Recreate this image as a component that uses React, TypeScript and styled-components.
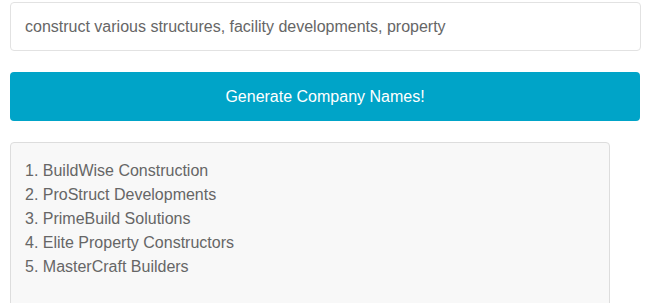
import styled, { createGlobalStyle } from 'styled-components';
import React, { useState } from 'react';

const names = [
  'BuildWise Construction',
  'ProStruct Developments',
  'PrimeBuild Solutions',
  'Elite Property Constructors',
  'MasterCraft Builders',
];

function App() {
  const [prompt, setPrompt] = useState<string>(
    'construct various structures, facility developments, property'
  );

  const handleInputChange = (event: React.ChangeEvent<HTMLInputElement>) => {
    setPrompt(event.target.value);
  };

  return (
    <Page>
      <GlobalStyle />
      <PromptInput type="text" value={prompt} onChange={handleInputChange} />
      <GenerateBtn>Generate Company Names!</GenerateBtn>
      <ResultBox>
        {names.map((name, idx) => (
          <ResultLine key={idx}>
            {idx + 1}. {name}
          </ResultLine>
        ))}
      </ResultBox>
    </Page>
  );
}

export default App;

const GlobalStyle = createGlobalStyle`
  body {
    margin: 0;
    background: #fff;
    font-family: "Liberation Sans", Arial, sans-serif;
    overflow: hidden;
  }
`;

const Page = styled.main`
  display: flex;
  flex-direction: column;
  height: 303px;
  overflow: hidden;
  padding: 2px 10px 0 10px;
  width: 631px;
`;

const PromptInput = styled.input`
  box-sizing: border-box;
  flex-shrink: 0;
  width: 631px;
  height: 49px;
  padding: 0 14px;
  border: 1px solid #e2e2e2;
  border-radius: 4px;
  font-family: inherit;
  font-size: 16px;
  color: #666;
  outline: none;
`;

const GenerateBtn = styled.button`
  box-sizing: border-box;
  flex-shrink: 0;
  width: 630px;
  height: 49px;
  margin-top: 21px;
  border: none;
  border-radius: 4px;
  background-color: #00a4c8;
  color: #fff;
  font-family: inherit;
  font-size: 16px;
  cursor: pointer;
`;

const ResultBox = styled.div`
  box-sizing: border-box;
  flex-shrink: 0;
  width: 600px;
  height: 200px;
  margin-top: 21px;
  padding: 16px 14px;
  border: 1px solid #ddd;
  border-radius: 4px;
  background-color: #f8f8f8;
  color: #666;
  font-size: 16px;
  line-height: 24px;
`;

const ResultLine = styled.div``;
